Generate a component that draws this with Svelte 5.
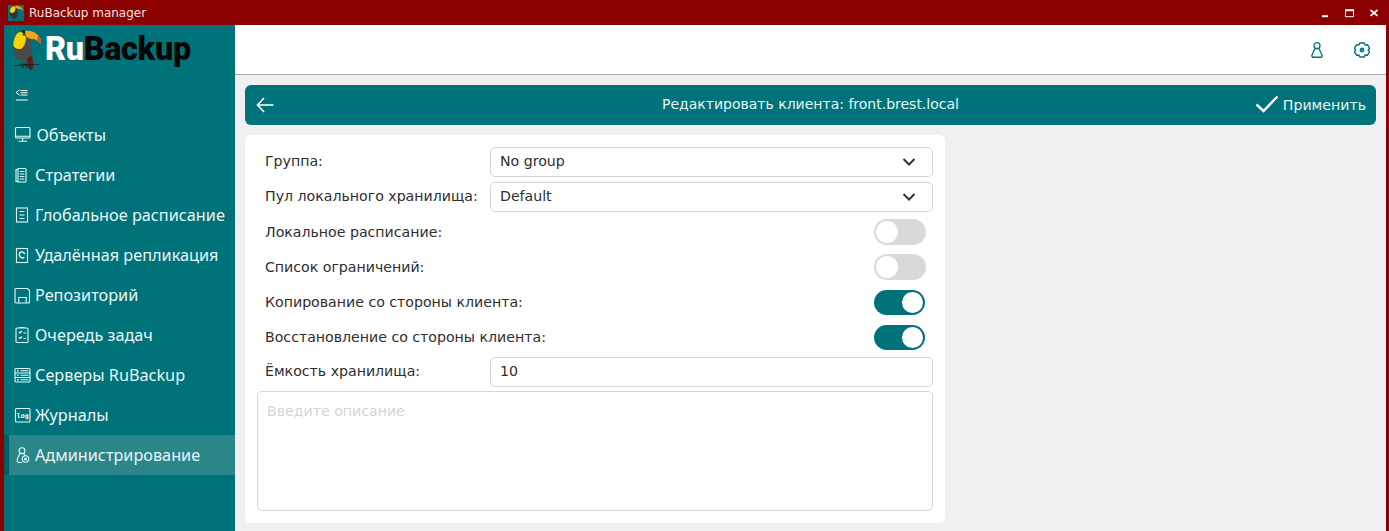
<script>
  const nav = [
    { id: 'monitor', label: 'Объекты' },
    { id: 'docs', label: 'Стратегии' },
    { id: 'doc', label: 'Глобальное расписание' },
    { id: 'repl', label: 'Удалённая репликация' },
    { id: 'disk', label: 'Репозиторий' },
    { id: 'tasks', label: 'Очередь задач' },
    { id: 'servers', label: 'Серверы RuBackup' },
    { id: 'log', label: 'Журналы' },
    { id: 'admin', label: 'Администрирование', active: true }
  ];
  const toggles = [
    { label: 'Локальное расписание:', on: false },
    { label: 'Список ограничений:', on: false },
    { label: 'Копирование со стороны клиента:', on: true },
    { label: 'Восстановление со стороны клиента:', on: true }
  ];
</script>

<div class="window">
  <div class="titlebar">
    <div class="app-title">
      <svg class="app-icon" width="16" height="16" viewBox="0 0 34 42" preserveAspectRatio="none">
        <rect x="-2" y="-2" width="38" height="46" fill="#00737a" />
        <path d="M4 15C4 6 8 1 13 1c3 0 5 3 6 8l2 13c0 6-2 12-5 15l-3 1C7 34 3 25 4 15z" fill="#333" />
        <path d="M4 15C5 7 9 3 12 3c3 1 4 4 4 6 0 5-3 11-6 12-3 1-6-2-6-6z" fill="#f7d60a" />
        <path d="M15 2c7-1 14 3 16 9l-.3 4c-2-3-5-5-9-5-3-1-5-2-6-3z" fill="#f2a01a" />
        <path d="M22 36l5 0-1 5h-4z" fill="#612015" />
      </svg>
      <span>RuBackup manager</span>
    </div>
    <div class="win-buttons">
      <svg width="12" height="12" viewBox="0 0 12 12"><rect x="4" y="8.200" width="6" height="2" fill="#fff" /></svg>
      <svg width="12" height="12" viewBox="0 0 12 12"><path d="M2.500 3.500h8v6.200h-8z" fill="none" stroke="#fff" stroke-width="1" /><rect x="2" y="2.200" width="9" height="2" fill="#fff" /></svg>
      <svg width="12" height="12" viewBox="0 0 12 12"><path d="M2.500 3l7 5.800M9.500 3l-7 5.800" stroke="#fff" stroke-width="1.700" /></svg>
    </div>
  </div>

  <div class="frame">
    <aside class="sidebar">
      <div class="logo">
        <svg class="toucan" width="34" height="42" viewBox="0 0 34 42">
          <path d="M3 19C3 9 7 1 13 1c4 0 6 4 7 9 2 6 2 12 1 17-1 4-3 6-5 6-6 0-13-6-13-14z" fill="#4b4b4b" />
          <path d="M12 1c3 0 5 3 6 7l-3 0z" fill="#1d1d1d" />
          <path d="M3.300 15C4 8 7 3 10 3c3 0 5 2 6 6 0 5-3 11-6 11-4 0-7-2-6.700-5z" fill="#f6d40b" />
          <path d="M15 2c7-1.500 14 3 16 9l-.3 4c-2-3-5-5-9-5-3-.5-5-1.500-6.300-3z" fill="#f3a61c" />
          <path d="M28 6.500c1.500 1.300 2.500 3 3 4.500l-.3 4c-1-1.500-2-2.700-3.700-3.700z" fill="#d9542b" />
          <circle cx="14" cy="5.300" r="1.500" fill="#1a6a5a" />
          <path d="M17 29c1-1 3-1 4-3l2 4 .5 6c0 3-1.500 5-3 5-2 0-2.500-3-2.500-5z" fill="#5e1f15" />
          <path d="M0 36.800l14-1.500 19-.3-19 1.700z" fill="#1c1c1c" />
          <path d="M12 34l1 5M16 34l1 5" stroke="#1c1c1c" stroke-width="1.200" />
        </svg>
        <span class="wordmark"><span class="ru">Ru</span><span class="backup">Backup</span></span>
      </div>
      <button class="collapse" aria-label="Свернуть">
        <svg width="14" height="12" viewBox="0 0 14 12" fill="none" stroke="#fff" stroke-width="1">
          <path d="M4.500 1L1 3.500 4.500 6M5.500 1.500h7M5.500 3.700h7M5.500 6h7M.8 11h12" />
        </svg>
      </button>
      <nav>
        {#each nav as item}
          <div class="nav-item" class:active={item.active} class:wide={item.id === 'monitor'}>
            <svg class="nav-icon" width="18" height="18" viewBox="0 0 18 18" fill="none" stroke="#dff" stroke-width="1.100">
              {#if item.id === 'monitor'}
                <rect x="1.500" y="1.500" width="14.500" height="10.500" rx="1" /><path d="M1.500 10.300h14.500M8.700 12v3M4.500 15.300h8.500" />
              {:else if item.id === 'docs'}
                <path d="M4 2.500h7a1 1 0 011 1v11.500a1 1 0 01-1 1H4z" /><path d="M4 3.500H2v12h2M5.800 5.500h4.500M5.800 8h4.500M5.800 10.500h4.500M5.800 13h4.500" />
              {:else if item.id === 'doc'}
                <rect x="2.500" y="2" width="11" height="14" /><path d="M5.500 5.500h5M5.500 9h5M5.500 12.500h5" />
              {:else if item.id === 'repl'}
                <rect x="2.500" y="2.500" width="11" height="14" /><path d="M10.500 8.300A2.600 2.600 0 105.800 10a2.600 2.600 0 004.400 1.200" stroke-width="1.400" />
              {:else if item.id === 'disk'}
                <path d="M1 3.500a1 1 0 011-1h11.500l2 2V16a1 1 0 01-1 1H2a1 1 0 01-1-1z" /><path d="M4.800 17v-5.500h7.400V17" />
              {:else if item.id === 'tasks'}
                <rect x="2" y="2" width="12" height="14.500" rx="1" /><path d="M5.500 1.500h5M5 6l1 1 2-2M5 11.500l1 1 2-2M9.500 7h2.500M9.500 12.500h2.500" />
              {:else if item.id === 'servers'}
                <rect x="1" y="2.500" width="15" height="13.500" rx="1" /><path d="M1 7h15M1 11.500h15M6.500 4.800h8M6.500 9.200h8M6.500 13.800h8" /><path d="M3 4.800h1.500M3 9.200h1.500M3 13.800h1.500" stroke-width="1.400" />
              {:else if item.id === 'log'}
                <rect x="1.500" y="2.500" width="14.500" height="13.500" rx="1" />
                <text x="8.700" y="11.500" text-anchor="middle" class="log-text">log</text>
              {:else}
                <circle cx="8" cy="4.700" r="2.900" /><path d="M6 7.500c-1 2-2.500 4-2.800 6.500-.1 1.500.8 2.500 2 2.500h2.800M10 7.500l1 2.500" /><circle cx="11.500" cy="13" r="3.200" /><circle cx="11.500" cy="13" r="1" />
              {/if}
            </svg>
            <span>{item.label}</span>
          </div>
        {/each}
      </nav>
    </aside>

    <main class="main">
      <header class="topbar">
        <svg width="12" height="16" viewBox="0 0 12 16" fill="none" stroke="#00737a" stroke-width="1.300">
          <circle cx="6" cy="3.700" r="3" /><path d="M4 6.500L1 13c-.5 1.300.2 2.300 1.200 2.300h7.600c1 0 1.700-1 1.200-2.300L8 6.500" />
          <path d="M1 15.300h10" />
        </svg>
        <svg width="16" height="16" viewBox="0 0 16 16" fill="none" stroke="#00737a" stroke-width="1.400" stroke-linejoin="round">
          <path d="M5.800 1h4.400l.9 2 2.400-.2 2.100 3.400-1.400 1.800 1.400 1.800-2.100 3.400-2.400-.2-.9 2H5.800l-.9-2-2.400.2-2.100-3.400L1.800 8 .4 6.200l2.100-3.400 2.400.2z" /><circle cx="8" cy="8" r="1.500" stroke-width="1.800" />
        </svg>
      </header>

      <div class="content">
        <div class="banner">
          <svg class="back" width="18" height="16" viewBox="0 0 18 16" fill="none" stroke="#fff" stroke-width="1.600">
            <path d="M17.500 8H2M8 1L1.500 8 8 15" />
          </svg>
          <span class="banner-title">Редактировать клиента: front.brest.local</span>
          <div class="apply">
            <svg width="24" height="18" viewBox="0 0 24 18" fill="none" stroke="#fff" stroke-width="2.400"><path d="M1.500 9.500l7 6.500L22.500 1.500" /></svg>
            <span>Применить</span>
          </div>
        </div>

        <form class="card">
          <div class="row field">
            <span class="label">Группа:</span>
            <div class="input">
              <span>No group</span>
              <svg width="14" height="8" viewBox="0 0 14 8" fill="none" stroke="#333" stroke-width="2"><path d="M1.500 1l5.500 5.500L12.500 1" /></svg>
            </div>
          </div>
          <div class="row field">
            <span class="label">Пул локального хранилища:</span>
            <div class="input">
              <span>Default</span>
              <svg width="14" height="8" viewBox="0 0 14 8" fill="none" stroke="#333" stroke-width="2"><path d="M1.500 1l5.500 5.500L12.500 1" /></svg>
            </div>
          </div>
          {#each toggles as t}
            <div class="row toggle-row">
              <span class="label">{t.label}</span>
              <span class="toggle" class:on={t.on}><span class="knob"></span></span>
            </div>
          {/each}
          <div class="row field">
            <span class="label">Ёмкость хранилища:</span>
            <div class="input"><span>10</span></div>
          </div>
          <div class="textarea">Введите описание</div>
        </form>
      </div>
    </main>
  </div>
</div>

<style>
  :global(body) { margin: 0; }
  .window {
    width: 1389px;
    height: 531px;
    display: flex;
    flex-direction: column;
    background: #8b0000;
    overflow: hidden;
  }
  .titlebar {
    height: 25px;
    flex: none;
    display: flex;
    align-items: center;
    justify-content: space-between;
    padding: 0 9px 0 8px;
    color: #f0e0e0;
    font: 12px "DejaVu Sans", sans-serif;
  }
  .app-title { display: flex; align-items: center; gap: 5px; }
  .app-icon { display: block; }
  .win-buttons { display: flex; gap: 13px; align-items: center; }
  .win-buttons svg { display: block; }
  .frame {
    flex: 1;
    min-height: 0;
    display: flex;
    padding: 0 3px 0 4px;
  }
  .sidebar {
    width: 231px;
    flex: none;
    background: #00737a;
    display: flex;
    flex-direction: column;
  }
  .logo {
    height: 50px;
    display: flex;
    align-items: center;
    padding-left: 6px;
    box-sizing: border-box;
  }
  .toucan { display: block; }
  .wordmark {
    font: 900 32.300px "Roboto", sans-serif;
    margin-left: 1px;
    letter-spacing: -0.3px;
    line-height: 1;
    padding-bottom: 2px;
  }
  .ru { color: #fff; }
  .backup { color: #050505; }
  .collapse {
    height: 40px;
    padding: 0 0 0 11px;
    margin: 0;
    border: 0;
    background: none;
    display: flex;
    align-items: center;
    box-sizing: border-box;
  }
  .collapse svg { display: block; }
  .nav-item {
    height: 40px;
    display: flex;
    align-items: center;
    gap: 3px;
    padding-left: 10px;
    color: #e8f6f6;
    font: 16.250px "Noto Sans", sans-serif;
    box-sizing: border-box;
  }
  .nav-item span { padding-bottom: 1px; }
  .nav-item.wide span { margin-left: 1.500px; }
  .nav-item.active {
    background: #2a8689;
    border-left: 5px solid #005f64;
    padding-left: 5px;
  }
  .nav-icon { display: block; flex: none; }
  .log-text {
    font: 700 6.500px "DejaVu Sans Mono", monospace;
    fill: #fff;
    stroke: none;
  }
  .main {
    flex: 1;
    min-width: 0;
    display: flex;
    flex-direction: column;
    background: #f0f0f0;
  }
  .topbar {
    height: 50px;
    box-sizing: border-box;
    flex: none;
    background: #fff;
    border-bottom: 1px solid #a8a8a8;
    display: flex;
    align-items: center;
    justify-content: flex-end;
    gap: 31px;
    padding-right: 16px;
  }
  .topbar svg { display: block; }
  .content { padding: 10px; flex: 1; }
  .banner {
    height: 40px;
    background: #00737a;
    border-radius: 6px;
    display: flex;
    align-items: center;
    position: relative;
    color: #e8f6f6;
    font: 14.150px "DejaVu Sans", sans-serif;
  }
  .back { position: absolute; left: 11px; top: 12px; }
  .banner-title { position: absolute; left: 0; right: 0; text-align: center; padding-bottom: 2px; font-size: 14px; }
  .apply {
    position: absolute;
    right: 10px;
    top: 0;
    height: 40px;
    display: flex;
    align-items: center;
    gap: 4px;
  }
  .apply svg { display: block; margin-top: -2px; }
  .card {
    margin-top: 10px;
    width: 700px;
    height: 388px;
    box-sizing: border-box;
    background: #fff;
    border-radius: 6px;
    padding: 12px;
    color: #2e2e2e;
    font: 14.150px "DejaVu Sans", sans-serif;
    display: flex;
    flex-direction: column;
    gap: 5px;
  }
  .row {
    display: flex;
    align-items: center;
    justify-content: space-between;
    padding-left: 8px;
    box-sizing: border-box;
    height: 30px;
    flex: none;
  }
  .toggle-row { padding-right: 7px; }
  .label { white-space: nowrap; padding-bottom: 1px; }
  .field .label { padding-bottom: 3px; }
  .input {
    width: 443px;
    height: 30px;
    box-sizing: border-box;
    border: 1px solid #d6d6d6;
    border-radius: 5px;
    display: flex;
    align-items: center;
    justify-content: space-between;
    padding: 0 16px 0 9px;
  }
  .input span { padding-bottom: 3px; }
  .input svg { display: block; }
  .toggle {
    width: 52px;
    height: 26px;
    box-sizing: border-box;
    border-radius: 13px;
    background: #d9d9d9;
    padding: 2px;
    display: flex;
    justify-content: flex-start;
  }
  .toggle.on { background: #00737a; justify-content: flex-end; width: 51px; height: 25px; margin-right: 1px; }
  .knob {
    width: 22px;
    height: 22px;
    border-radius: 50%;
    background: #fff;
    display: block;
  }
  .toggle.on .knob { width: 21px; height: 21px; }
  .textarea {
    height: 120px;
    flex: none;
    box-sizing: border-box;
    border: 1px solid #d6d6d6;
    border-radius: 5px;
    padding: 11px 9px;
    color: #d4d4d4;
    margin-top: -1px;
  }
</style>
